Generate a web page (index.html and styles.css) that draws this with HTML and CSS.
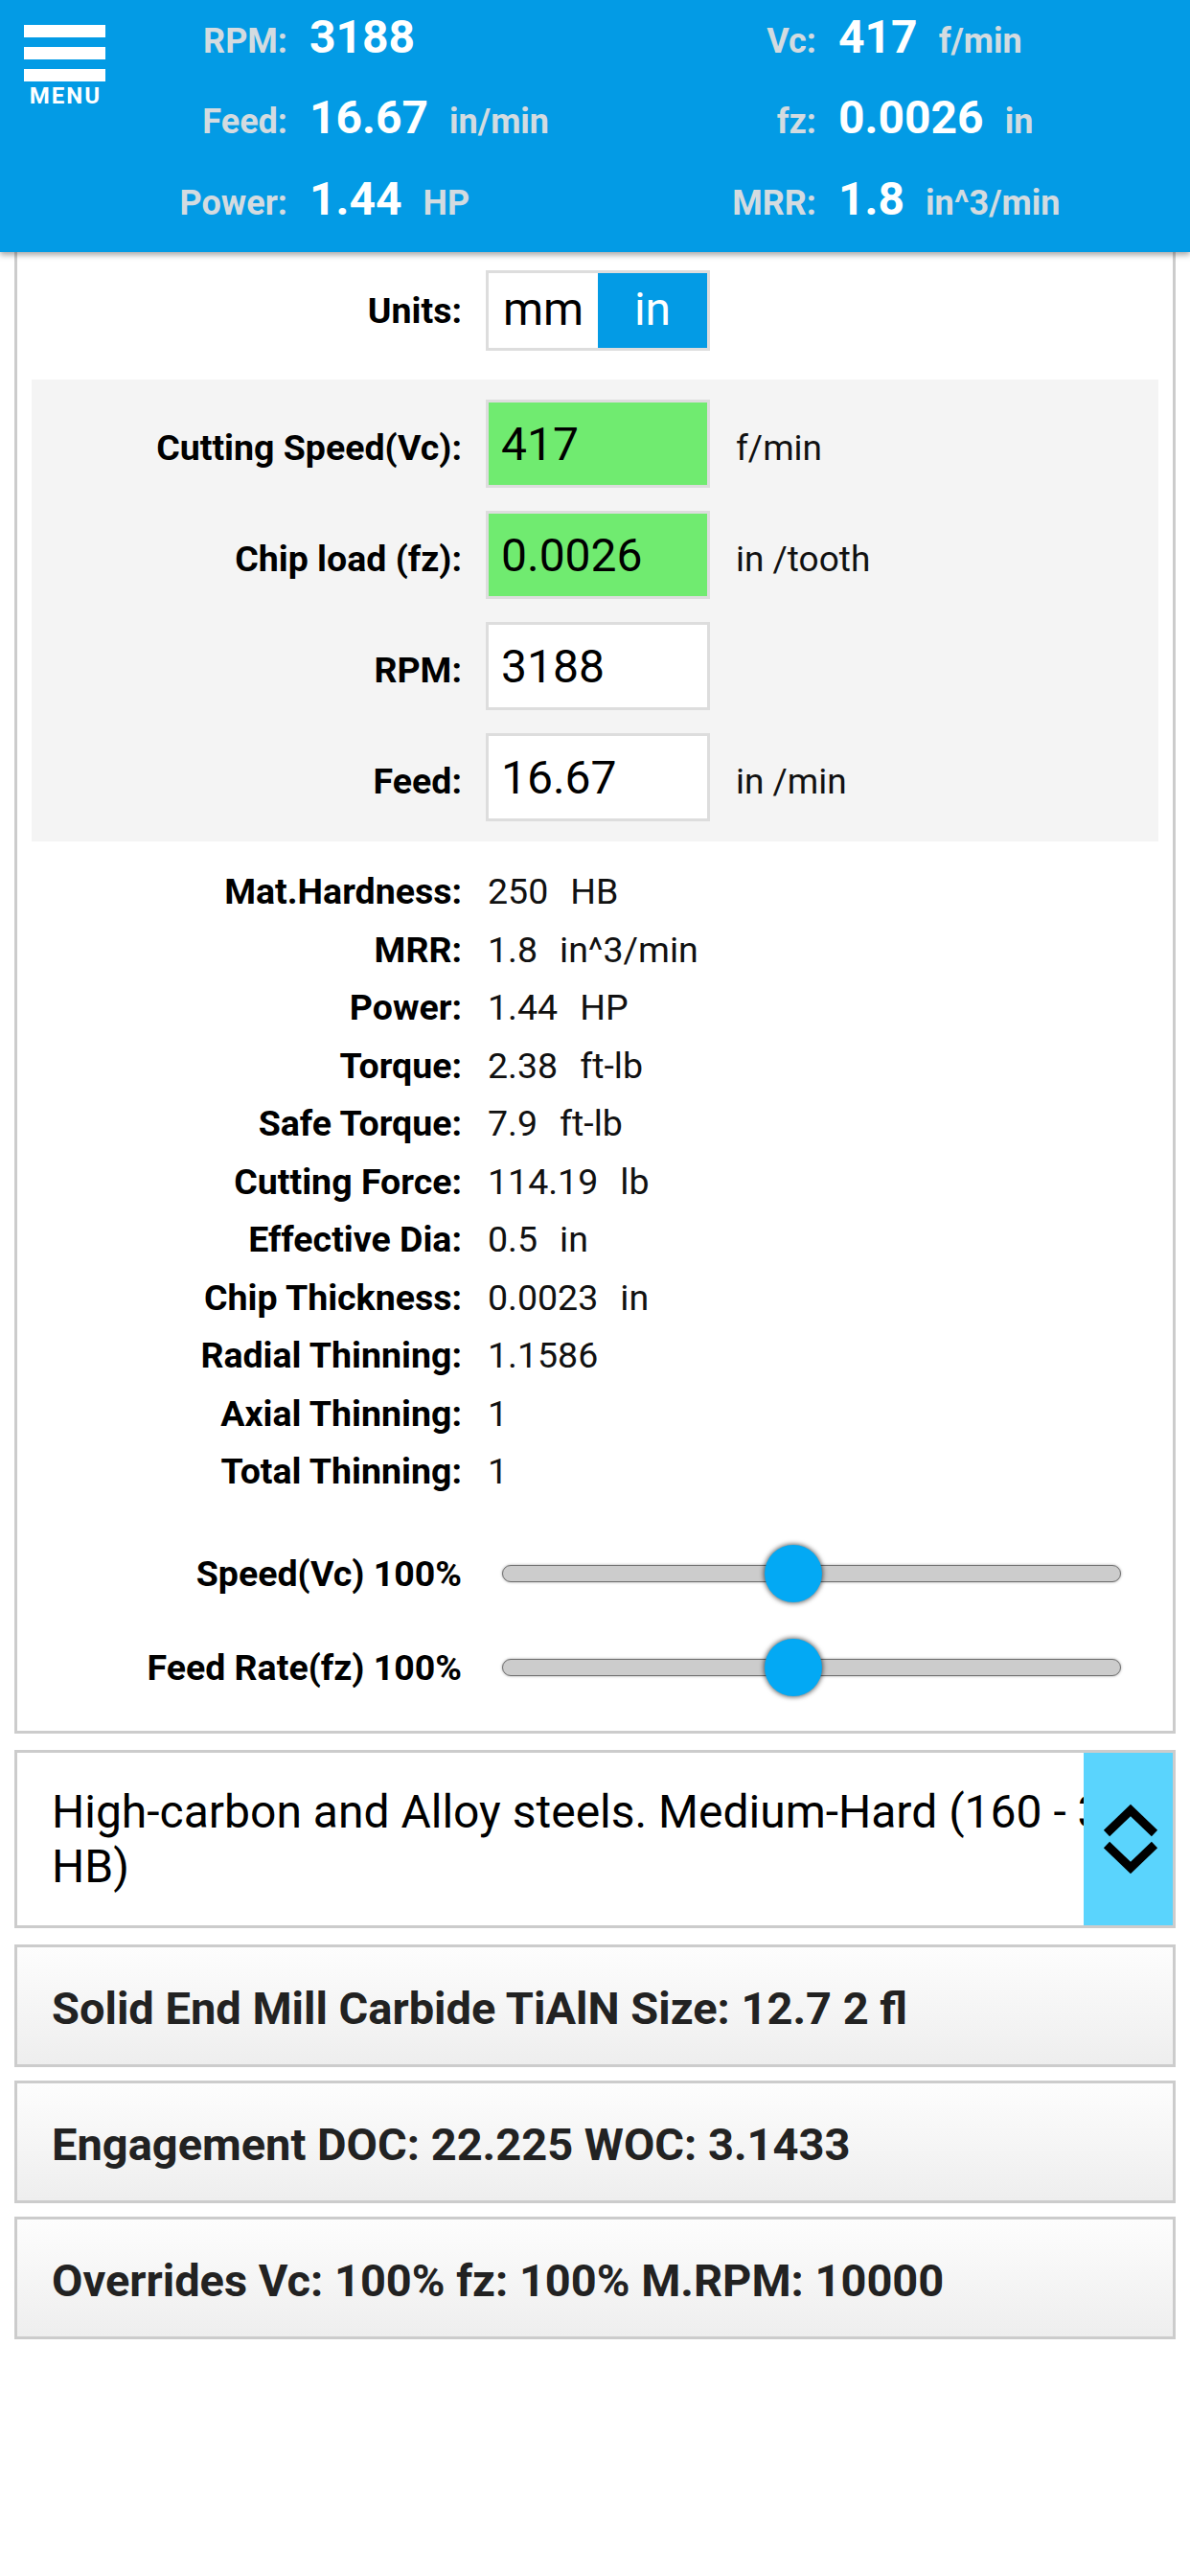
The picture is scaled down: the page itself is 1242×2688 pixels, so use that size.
FILE: index.html
```html
<!DOCTYPE html>
<html lang="en">
<head>
<meta charset="utf-8">
<title>Speeds and Feeds</title>
<link rel="stylesheet" href="styles.css">
</head>
<body>
<header class="topbar">
  <div class="menu">
    <span class="menu-bar"></span>
    <span class="menu-bar"></span>
    <span class="menu-bar"></span>
    <span class="menu-text">MENU</span>
  </div>
  <div class="stats">
    <span class="s-label">RPM:</span><span class="s-cell"><span class="s-val">3188</span></span>
    <span class="s-label">Vc:</span><span class="s-cell"><span class="s-val">417</span><span class="s-unit">f/min</span></span>
    <span class="s-label">Feed:</span><span class="s-cell"><span class="s-val">16.67</span><span class="s-unit">in/min</span></span>
    <span class="s-label">fz:</span><span class="s-cell"><span class="s-val">0.0026</span><span class="s-unit">in</span></span>
    <span class="s-label">Power:</span><span class="s-cell"><span class="s-val">1.44</span><span class="s-unit">HP</span></span>
    <span class="s-label">MRR:</span><span class="s-cell"><span class="s-val">1.8</span><span class="s-unit">in^3/min</span></span>
  </div>
</header>

<main class="card">
  <div class="units-row">
    <span class="lbl">Units:</span>
    <div class="toggle"><span class="seg">mm</span><span class="seg seg-active">in</span></div>
  </div>

  <section class="inputs">
    <div class="in-row"><span class="lbl">Cutting Speed(Vc):</span><span class="field field-green">417</span><span class="unit">f/min</span></div>
    <div class="in-row"><span class="lbl">Chip load (fz):</span><span class="field field-green">0.0026</span><span class="unit">in /tooth</span></div>
    <div class="in-row"><span class="lbl">RPM:</span><span class="field">3188</span><span class="unit"></span></div>
    <div class="in-row"><span class="lbl">Feed:</span><span class="field">16.67</span><span class="unit">in /min</span></div>
  </section>

  <dl class="info">
    <dt>Mat.Hardness:</dt><dd>250<span class="iu">HB</span></dd>
    <dt>MRR:</dt><dd>1.8<span class="iu">in^3/min</span></dd>
    <dt>Power:</dt><dd>1.44<span class="iu">HP</span></dd>
    <dt>Torque:</dt><dd>2.38<span class="iu">ft-lb</span></dd>
    <dt>Safe Torque:</dt><dd>7.9<span class="iu">ft-lb</span></dd>
    <dt>Cutting Force:</dt><dd>114.19<span class="iu">lb</span></dd>
    <dt>Effective Dia:</dt><dd>0.5<span class="iu">in</span></dd>
    <dt>Chip Thickness:</dt><dd>0.0023<span class="iu">in</span></dd>
    <dt>Radial Thinning:</dt><dd>1.1586</dd>
    <dt>Axial Thinning:</dt><dd>1</dd>
    <dt>Total Thinning:</dt><dd>1</dd>
  </dl>

  <div class="sliders">
    <div class="sl-row">
      <span class="lbl">Speed(Vc) 100%</span>
      <div class="track"><span class="thumb" style="left: 47%"></span></div>
    </div>
    <div class="sl-row">
      <span class="lbl">Feed Rate(fz) 100%</span>
      <div class="track"><span class="thumb" style="left: 47%"></span></div>
    </div>
  </div>
</main>

<div class="select">
  <div class="select-text">High-carbon and Alloy steels. Medium-Hard (160 - 360 HB)</div>
  <div class="select-arrow">
    <svg width="93" height="180" viewBox="0 0 93 180" aria-hidden="true">
      <polyline points="24,84 49,60 74,84" fill="none" stroke="#000" stroke-width="9"/>
      <polyline points="24,96 49,120 74,96" fill="none" stroke="#000" stroke-width="9"/>
    </svg>
  </div>
</div>

<div class="acc">Solid End Mill Carbide TiAlN Size: 12.7 2 fl</div>
<div class="acc">Engagement DOC: 22.225 WOC: 3.1433</div>
<div class="acc">Overrides Vc: 100% fz: 100% M.RPM: 10000</div>
</body>
</html>
```

FILE: styles.css
```css
* { box-sizing: border-box; }

html, body {
  margin: 0;
  padding: 0;
  background: #fff;
}

body {
  font-family: Roboto, "Noto Sans", "Liberation Sans", sans-serif;
  color: #000;
  width: 1242px;
}

/* ---------- top bar ---------- */
.topbar {
  position: relative;
  z-index: 2;
  display: flex;
  align-items: flex-start;
  height: 263px;
  background: #039be5;
  box-shadow: 0 3px 6px rgba(0, 0, 0, 0.35);
}

.menu {
  display: flex;
  flex-direction: column;
  align-items: center;
  width: 85px;
  margin: 26px 0 0 25px;
}

.menu-bar {
  display: block;
  width: 85px;
  height: 13px;
  background: #fff;
  margin-bottom: 10px;
}

.menu-bar:nth-child(3) { margin-bottom: 0; }

.menu-text {
  color: #fff;
  font-weight: 700;
  font-size: 24px;
  line-height: 26px;
  letter-spacing: 2px;
  padding-left: 2px;
  margin-top: 2px;
}

.stats {
  display: grid;
  grid-template-columns: 190px 417px 89px auto;
  grid-auto-rows: 84.5px;
  column-gap: 23px;
  align-items: baseline;
  padding-top: 9.5px;
}

.s-label {
  text-align: right;
  color: #d3dbe0;
  font-weight: 700;
  font-size: 36px;
  white-space: nowrap;
}

.s-cell { white-space: nowrap; }

.s-val {
  color: #fff;
  font-weight: 700;
  font-size: 48px;
}

.s-unit {
  color: #d3dbe0;
  font-weight: 700;
  font-size: 36px;
  margin-left: 22px;
}

/* ---------- main card ---------- */
.card {
  margin: 0 15px;
  border: 3px solid #ccc;
  border-top: 0;
  padding: 19px 0 36px;
}

.lbl {
  text-align: right;
  font-weight: 700;
  font-size: 37.5px;
  white-space: nowrap;
}

.units-row {
  display: grid;
  grid-template-columns: 464px 234px;
  column-gap: 25px;
  align-items: center;
}

.toggle {
  display: flex;
  height: 84px;
  border: 3px solid #ddd;
  background: #fff;
}

.seg {
  flex: 1;
  text-align: center;
  font-size: 48px;
  line-height: 76px;
  color: #000;
}

.seg-active {
  background: #039be5;
  color: #fff;
}

.inputs {
  margin: 30px 15px 0;
  background: #f4f4f4;
  padding: 21px 0;
  display: flex;
  flex-direction: column;
  gap: 24px;
}

.in-row {
  display: grid;
  grid-template-columns: 449px 234px auto;
  column-gap: 25px;
  align-items: baseline;
}

.field {
  display: block;
  height: 92px;
  border: 3px solid #ddd;
  background: #fff;
  padding: 2px 0 0 13px;
  font-size: 48px;
  line-height: 84px;
  color: #000;
}

.field-green { background: #70eb70; }

.unit {
  font-size: 37px;
  color: #111;
  margin-left: 2px;
}

.info {
  margin: 22px 0 0;
  display: grid;
  grid-template-columns: 464px auto;
  column-gap: 27px;
  line-height: 60.5px;
  font-size: 37.5px;
}

.info dt {
  text-align: right;
  font-weight: 700;
  white-space: nowrap;
}

.info dd {
  margin: 0;
  color: #111;
  white-space: nowrap;
}

.iu { margin-left: 23px; }

.sliders {
  margin-top: 46px;
  display: flex;
  flex-direction: column;
  gap: 38px;
}

.sl-row {
  display: grid;
  grid-template-columns: 464px 646px;
  column-gap: 42px;
  align-items: center;
  height: 60px;
}

.track {
  position: relative;
  height: 18px;
  border: 1px solid #6f6f6f;
  border-radius: 9px;
  background: #ccc;
  box-shadow: 0 0 3px rgba(0, 0, 0, 0.35);
}

.thumb {
  position: absolute;
  top: 50%;
  width: 60px;
  height: 60px;
  margin: -30px 0 0 -30px;
  border-radius: 50%;
  background: #03a9f4;
  box-shadow: 0 0 5px 1px rgba(0, 0, 0, 0.6);
}

/* ---------- material select ---------- */
.select {
  position: relative;
  margin: 17px 15px 0;
  border: 3px solid #ccc;
  padding: 33px 0 33px 36px;
  overflow: hidden;
}

.select-text {
  font-size: 48px;
  line-height: 57px;
  color: #000;
}

.select-arrow {
  position: absolute;
  top: 0;
  right: 0;
  bottom: 0;
  width: 93px;
  background: #5ad4fd;
  display: flex;
  align-items: center;
  justify-content: center;
}

/* ---------- accordion bars ---------- */
.acc {
  display: flex;
  align-items: center;
  height: 128px;
  margin: 14px 15px 0;
  border: 3px solid #ccc;
  padding: 6px 0 0 36px;
  background: linear-gradient(#fdfdfd, #eeeeee);
  font-weight: 700;
  font-size: 47px;
  color: #222;
  white-space: nowrap;
}

.select + .acc { margin-top: 17px; }
```
